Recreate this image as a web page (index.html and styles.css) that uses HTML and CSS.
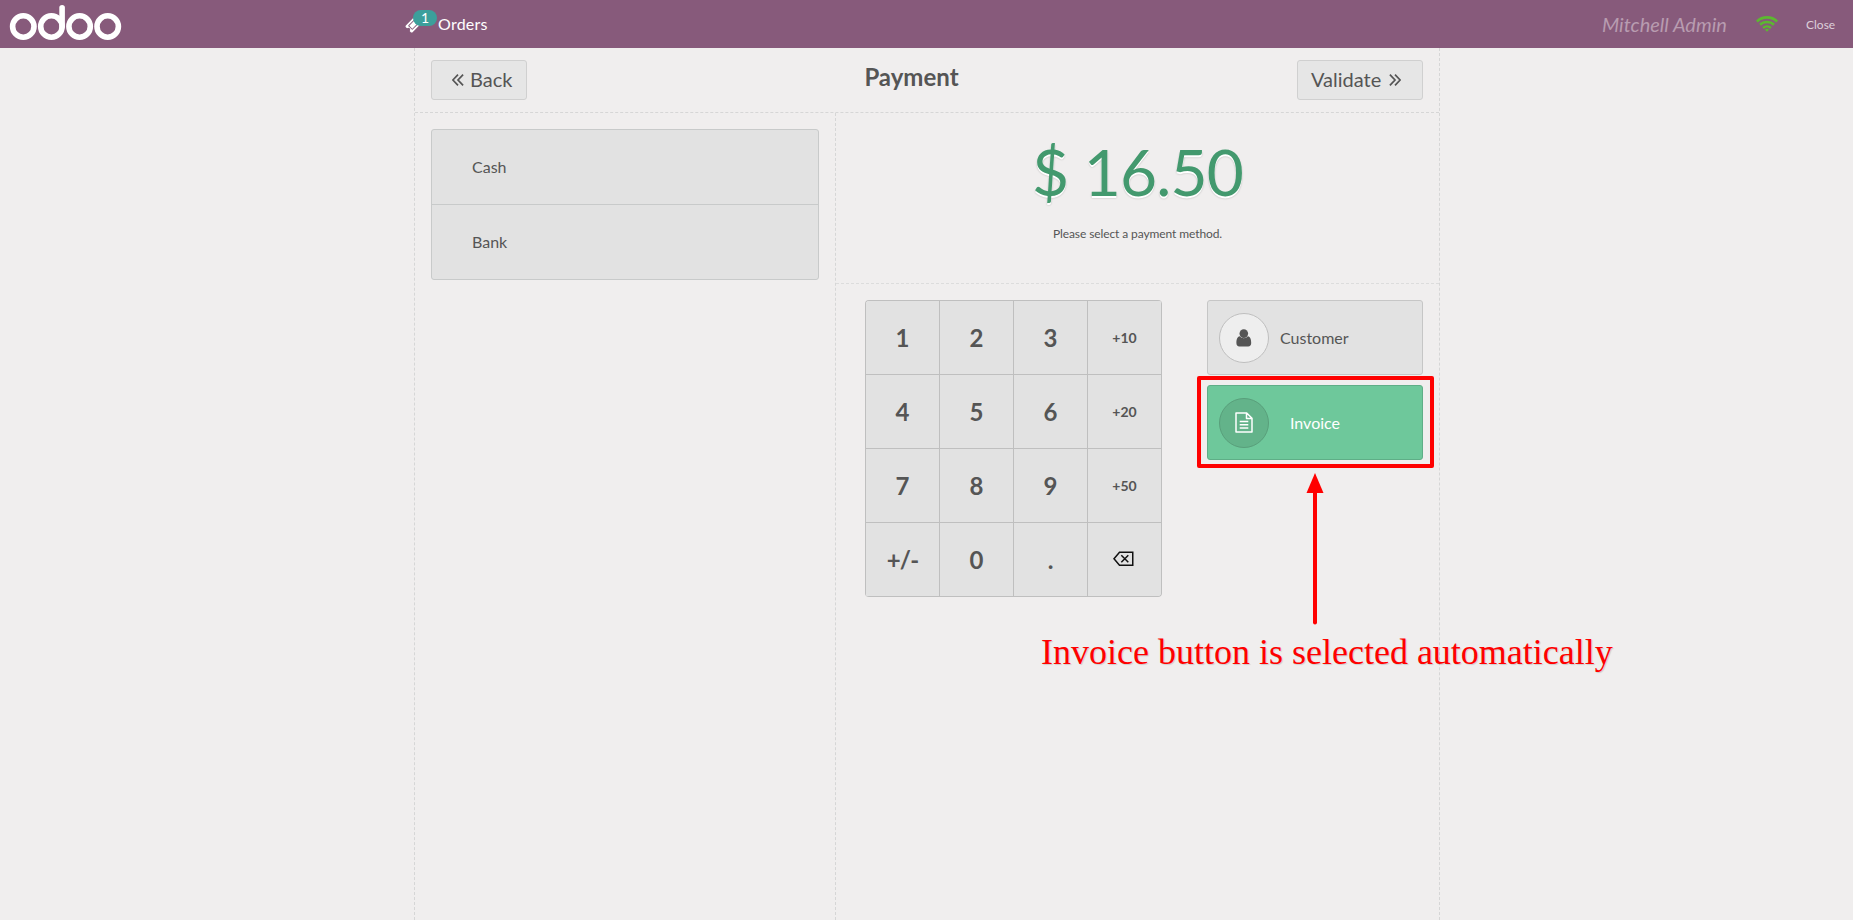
FILE: index.html
```html
<!DOCTYPE html>
<html lang="en">
<head>
<meta charset="utf-8">
<title>Payment</title>
<link rel="stylesheet" href="styles.css">
</head>
<body>
<header class="topbar">
  <svg class="logo" width="124" height="48" viewBox="0 0 124 48" fill="none" stroke="#fff" stroke-width="5.6" stroke-linecap="round"><circle cx="23.3" cy="26.5" r="10.7"/><circle cx="51.4" cy="26.5" r="10.7"/><path d="M62.1 26.500V7.800"/><circle cx="79.600" cy="26.500" r="10.700"/><circle cx="107.700" cy="26.500" r="10.700"/></svg>
  <div class="orders">
    <span class="ticket">
      <svg width="17" height="17" viewBox="0 0 1792 1792" fill="#fff"><path d="M1024 452l316 316-572 572-316-316zm-211 979l618-618q19-19 19-45t-19-45l-362-362q-18-18-45-18t-45 18l-618 618q-19 19-19 45t19 45l362 362q18 18 45 18t45-18zm889-637l-907 908q-37 37-90.500 37t-90.500-37l-126-126q56-56 56-136t-56-136-136-56-136 56l-125-126q-37-37-37-90.500t37-90.500l907-906q37-37 90.500-37t90.500 37l125 125q-56 56-56 136t56 136 136 56 136-56l126 125q37 37 37 90.500t-37 90.500z"/></svg>
      <span class="badge">1</span>
    </span>
    <span class="orders-label">Orders</span>
  </div>
  <div class="user">Mitchell Admin</div>
  <svg class="wifi" width="22" height="16" viewBox="0 0 22 16" fill="none" stroke="#5cb830" stroke-width="2.600"><path d="M.9 5.500a14.500 14.500 0 0 1 20.200 0M4 8.800a10 10 0 0 1 14 0M7.100 12a5.700 5.700 0 0 1 7.800 0"/><path d="M11 15.800l-2-2a2.900 2.900 0 0 1 4 0z" fill="#5cb830" stroke="none"/></svg>
  <div class="close">Close</div>
</header>
<main class="screen">
  <div class="title-row">
    <button class="nav back"><svg width="12" height="12" viewBox="0 0 12 12"><path d="M6 .7L.9 6 6 11.300M11.100.7L6 6l5.100 5.300"/></svg><span>Back</span></button>
    <h1>Payment</h1>
    <button class="nav next"><span>Validate</span><svg width="12" height="12" viewBox="0 0 12 12"><path d="M.9.7L6 6 .9 11.300M6 .7L11.100 6 6 11.300"/></svg></button>
  </div>
  <div class="content">
    <section class="methods">
      <div class="method-list"><div class="method">Cash</div><div class="method">Bank</div></div>
    </section>
    <section class="payment">
      <div class="due">
        <div class="amount">$ 16.50</div>
        <div class="hint">Please select a payment method.</div>
      </div>
      <div class="controls">
        <div class="numpad">
          <button>1</button><button>2</button><button>3</button><button class="mode">+10</button>
          <button>4</button><button>5</button><button>6</button><button class="mode">+20</button>
          <button>7</button><button>8</button><button>9</button><button class="mode">+50</button>
          <button class="sign">+/-</button><button>0</button><button>.</button><button><svg class="erase" width="21" height="16" viewBox="0 0 21 16" fill="none" stroke="#111" stroke-width="1.500"><path d="M6.500 1.250H19.750v13H6.500L1 7.750z"/><path d="M8.300 4.200l7 7.100M15.300 4.200l-7 7.100"/></svg></button>
        </div>
        <div class="options">
          <div class="option"><span class="disc"><svg width="16" height="18" viewBox="0 0 16 18" fill="#555"><circle cx="7.800" cy="4.600" r="4.300"/><path d="M3.700 7.200C1.200 7.600.4 10.400.4 14c0 2 1.100 3.500 3 3.500h8.800c1.900 0 3-1.500 3-3.500 0-3.600-.8-6.400-3.300-6.800a5 5 0 0 1-8.200 0z"/></svg></span><span class="option-label">Customer</span></div>
          <div class="option selected"><span class="disc"><svg width="18" height="21" viewBox="0 0 18 21" fill="none" stroke="#fff" stroke-width="1.500" stroke-linejoin="round"><path d="M1 1h10.700L17 6.300V20H1zM11.500 1v5.500H17"/><path d="M4.700 9.500h8.600M4.700 12.700h8.600M4.700 15.900h8.600"/></svg></span><span class="option-label">Invoice</span></div>
        </div>
      </div>
    </section>
  </div>
</main>
<div class="callout-box"></div>
<svg class="callout-arrow" width="18" height="152" viewBox="0 0 18 152"><path d="M9 18v131.500" stroke="#f00" stroke-width="4" stroke-linecap="round"/><path d="M9 0l8.500 20H.5z" fill="#f00"/></svg>
<div class="callout-text">Invoice button is selected automatically</div>
</body>
</html>
```
FILE: styles.css
```css
* { box-sizing: border-box; }
body {
  margin: 0;
  height: 920px;
  overflow: hidden;
  position: relative;
  background: #f0eeee;
  color: #555;
  font-family: Lato, sans-serif;
  font-size: 16px;
}
button { font-family: inherit; color: inherit; margin: 0; padding: 0; }

.topbar { height: 48px; background: #875a7b; display: flex; align-items: center; color: #fff; }
.logo { flex: none; }
.orders { display: flex; align-items: center; margin-left: 281px; width: 1197px; }
.ticket { position: relative; width: 33px; height: 16px; display: block; }
.ticket svg { display: block; }
.badge {
  position: absolute; left: 8px; top: -6px;
  width: 24px; height: 16px; border-radius: 8px;
  background: #3c9f9b; font-size: 14px; line-height: 15px; text-align: center;
}
.orders-label { line-height: 20px; letter-spacing: .25px; }
.user { width: 154px; flex: none; font-size: 20px; font-style: italic; color: #b89cb0; white-space: nowrap; }
.wifi { flex: none; margin-right: 28px; }
.close { font-size: 12px; color: #ddd0da; }

.screen {
  width: 1026px; height: 872px; margin-left: 414px;
  border: dashed #d6d6d6; border-width: 0 1px;
  display: flex; flex-direction: column;
}
.title-row {
  height: 65px; flex: none; padding: 12px 16px;
  border-bottom: 1px dashed #d6d6d6;
  display: flex; justify-content: space-between; align-items: flex-start;
}
.title-row h1 { margin: 2px 1px 0 0; font-size: 24px; line-height: 29px; font-weight: 700; }
.nav {
  height: 40px; border: 1px solid #d0d0d0; border-radius: 3px; background: #e6e6e6;
  font-size: 20px; display: flex; align-items: center;
}
.nav span { padding-bottom: 2px; }
.nav svg { fill: none; stroke: #555; stroke-width: 1.7; }
.back { width: 96px; padding-left: 20px; gap: 6px; }
.next { width: 126px; padding-left: 13px; gap: 8px; }

.content { flex: 1; display: flex; }
.methods { width: 421px; padding: 16px; border-right: 1px dashed #d6d6d6; }
.method-list { border: 1px solid #c8caca; border-radius: 3px; background: #e2e2e2; }
.method { height: 74px; padding-left: 40px; line-height: 74px; }
.method + .method { height: 75px; border-top: 1px solid #c8caca; }
.payment { flex: 1; }
.due { height: 171px; border-bottom: 1px dashed #dcdcdc; text-align: center; padding-top: 20px; }
.amount { font-size: 64px; line-height: 77px; letter-spacing: -.9px; color: #43996e; text-shadow: 0 2px white, 0 2px 2px rgba(0,0,0,.27); }
.hint { margin-top: 16px; font-size: 12px; line-height: 15px; letter-spacing: -.1px; }
.controls { display: flex; padding: 16px 16px 0 29px; justify-content: space-between; }
.numpad {
  display: grid; grid-template-columns: repeat(4, 74px); grid-auto-rows: 74px;
  border: solid #bfbfbf; border-width: 1px 0 0 1px; border-radius: 4px; overflow: hidden;
}
.numpad button {
  border: solid #bfbfbf; border-width: 0 1px 1px 0; background: #e2e2e2;
  font-size: 24px; font-weight: 700; display: flex; align-items: center; justify-content: center;
}
.numpad button:last-child { border-bottom-right-radius: 3px; }
.numpad .mode { font-size: 14px; }
.numpad .sign { letter-spacing: -.8px; }
.erase { margin-right: 3px; margin-bottom: 2px; }
.options { width: 216px; display: flex; flex-direction: column; gap: 10px; }
.option {
  height: 75px; border: 1px solid #c6c6c6; border-radius: 3px; background: #e2e2e2;
  display: flex; align-items: center; padding-left: 11px; gap: 11px;
}
.option-label { padding-bottom: 1px; }
.disc {
  width: 50px; height: 50px; border: 1px solid #bfbfbf; border-radius: 50%;
  background: #eee; display: flex; align-items: center; justify-content: center;
}
.selected { background: #6ec89b; border-color: #5fae87; color: #fff; gap: 21px; }
.selected .disc { background: #63b38a; border-color: #599f7b; }

.callout-box { position: absolute; left: 1197px; top: 376px; width: 237px; height: 92px; border: 4px solid #f00; border-radius: 2px; }
.callout-arrow { position: absolute; left: 1306px; top: 473px; }
.callout-text {
  position: absolute; left: 1041px; top: 631px; white-space: nowrap;
  font: 36px/42px "Liberation Serif", "Times New Roman", serif; color: #f00;
  text-shadow: 1px 1px 1px rgba(0,0,0,.14);
}
```
